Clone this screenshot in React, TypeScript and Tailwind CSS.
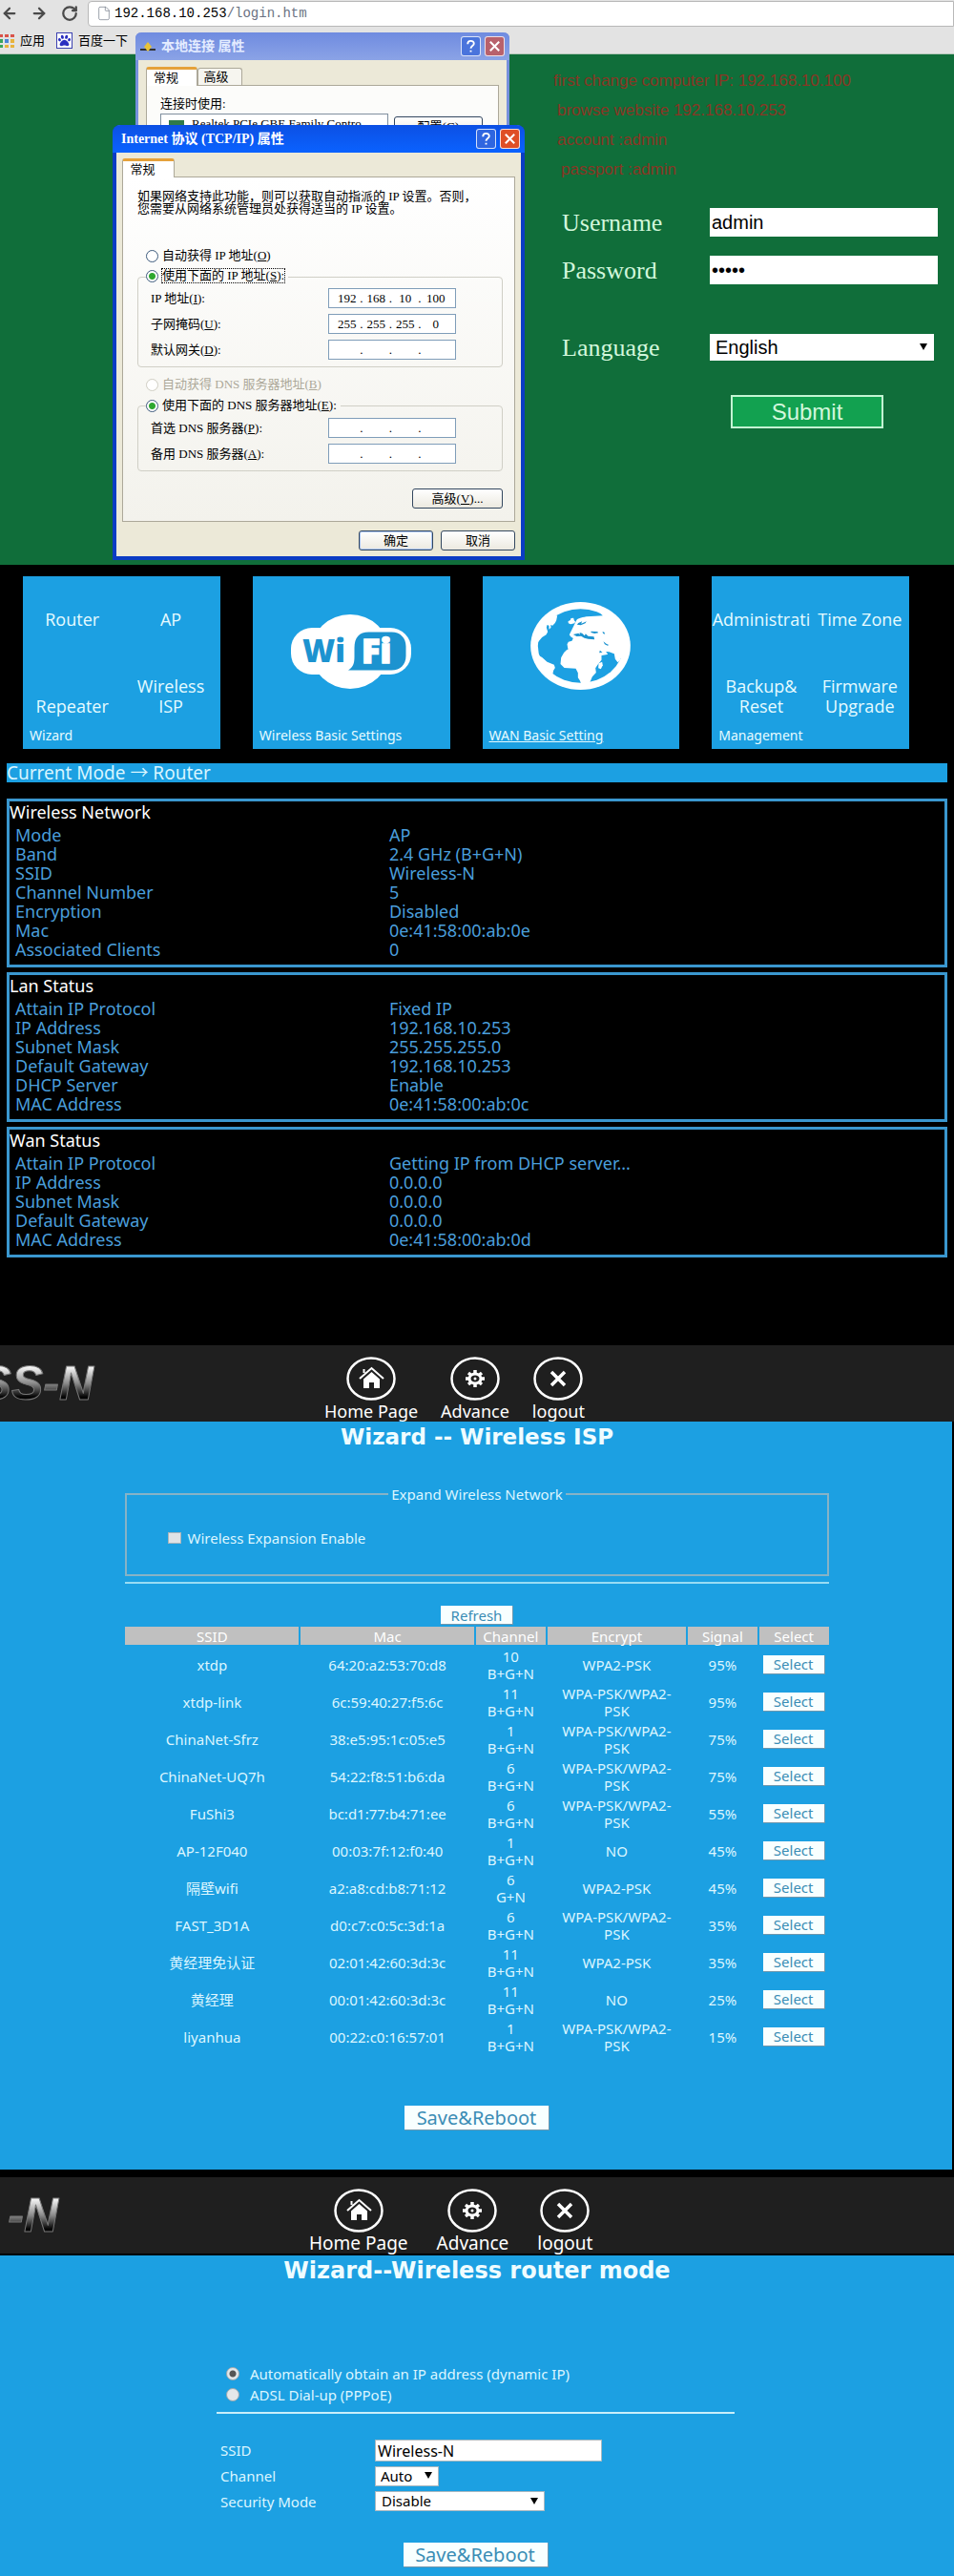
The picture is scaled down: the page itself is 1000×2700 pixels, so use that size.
import { ReactNode, useState } from "react";
import { ArrowLeft, ArrowRight, File, RotateCw } from "lucide-react";
import { FaPaw } from "react-icons/fa";

type Row = [string, string];

const wirelessRows: Row[] = [
  ["Mode", "AP"],
  ["Band", "2.4 GHz (B+G+N)"],
  ["SSID", "Wireless-N"],
  ["Channel Number", "5"],
  ["Encryption", "Disabled"],
  ["Mac", "0e:41:58:00:ab:0e"],
  ["Associated Clients", "0"],
];

const lanRows: Row[] = [
  ["Attain IP Protocol", "Fixed IP"],
  ["IP Address", "192.168.10.253"],
  ["Subnet Mask", "255.255.255.0"],
  ["Default Gateway", "192.168.10.253"],
  ["DHCP Server", "Enable"],
  ["MAC Address", "0e:41:58:00:ab:0c"],
];

const wanRows: Row[] = [
  ["Attain IP Protocol", "Getting IP from DHCP server..."],
  ["IP Address", "0.0.0.0"],
  ["Subnet Mask", "0.0.0.0"],
  ["Default Gateway", "0.0.0.0"],
  ["MAC Address", "0e:41:58:00:ab:0d"],
];

const networks = [
  { ssid: "xtdp", mac: "64:20:a2:53:70:d8", channel: "10", band: "B+G+N", encrypt: "WPA2-PSK", signal: "95%" },
  { ssid: "xtdp-link", mac: "6c:59:40:27:f5:6c", channel: "11", band: "B+G+N", encrypt: "WPA-PSK/WPA2-PSK", signal: "95%" },
  { ssid: "ChinaNet-Sfrz", mac: "38:e5:95:1c:05:e5", channel: "1", band: "B+G+N", encrypt: "WPA-PSK/WPA2-PSK", signal: "75%" },
  { ssid: "ChinaNet-UQ7h", mac: "54:22:f8:51:b6:da", channel: "6", band: "B+G+N", encrypt: "WPA-PSK/WPA2-PSK", signal: "75%" },
  { ssid: "FuShi3", mac: "bc:d1:77:b4:71:ee", channel: "6", band: "B+G+N", encrypt: "WPA-PSK/WPA2-PSK", signal: "55%" },
  { ssid: "AP-12F040", mac: "00:03:7f:12:f0:40", channel: "1", band: "B+G+N", encrypt: "NO", signal: "45%" },
  { ssid: "隔壁wifi", mac: "a2:a8:cd:b8:71:12", channel: "6", band: "G+N", encrypt: "WPA2-PSK", signal: "45%" },
  { ssid: "FAST_3D1A", mac: "d0:c7:c0:5c:3d:1a", channel: "6", band: "B+G+N", encrypt: "WPA-PSK/WPA2-PSK", signal: "35%" },
  { ssid: "黄经理免认证", mac: "02:01:42:60:3d:3c", channel: "11", band: "B+G+N", encrypt: "WPA2-PSK", signal: "35%" },
  { ssid: "黄经理", mac: "00:01:42:60:3d:3c", channel: "11", band: "B+G+N", encrypt: "NO", signal: "25%" },
  { ssid: "liyanhua", mac: "00:22:c0:16:57:01", channel: "1", band: "B+G+N", encrypt: "WPA-PSK/WPA2-PSK", signal: "15%" },
];

function BrowserBar() {
  return (
    <header className="bg-[#e3e3e3] h-[57px] border-b border-[#b5c9ba]">
      <div className="flex items-center h-7 text-[#4a4a4a]">
        <button aria-label="Back" className="w-8 pl-px">
          <ArrowLeft className="size-[18px]" strokeWidth={3} />
        </button>
        <button aria-label="Forward" className="w-8">
          <ArrowRight className="size-[18px]" strokeWidth={3} />
        </button>
        <button aria-label="Reload" className="w-7">
          <RotateCw className="size-[18px]" strokeWidth={3} />
        </button>
        <div className="flex-1 flex items-center h-[27px] pl-2 bg-white border border-[#b8b8b8] rounded-l-sm font-['Liberation_Mono',monospace] text-sm">
          <File className="size-4 text-gray-500 mr-[3px]" strokeWidth={1} />
          <span className="text-black">192.168.10.253</span>
          <span className="text-gray-500">/login.htm</span>
        </div>
      </div>
      <nav className="flex items-center h-7 text-[13px] text-black font-['Noto_Sans_CJK_SC',sans-serif]">
        <a href="#apps" className="flex items-center gap-[6px]">
          <svg viewBox="0 0 15 15" className="size-[15px]">
            <path d="M0 1h3v3H0zM5 1h4v3H5zM11 1h4v3h-4z" fill="#d9534a" />
            <path d="M0 6h3v4H0z" fill="#3aa55b" />
            <path d="M5 6h4v4H5z" fill="#4a86d8" />
            <path d="M11 6h4v4h-4zM5 12h4v3H5zM11 12h4v3h-4z" fill="#e8b33c" />
            <path d="M0 12h3v3H0z" fill="#3aa55b" />
          </svg>
          应用
        </a>
        <a href="#baidu" className="flex items-center gap-[6px] ml-3">
          <span className="flex items-center justify-center size-[17px] bg-white border border-[#3a40b0]">
            <FaPaw className="size-[13px] text-[#2a2fc0]" />
          </span>
          百度一下
        </a>
      </nav>
    </header>
  );
}

function TitleButtons({ dim }: { dim?: boolean }) {
  return (
    <div className="flex gap-1 ml-auto">
      <button
        aria-label="Help"
        className={`size-[21px] rounded-[3px] border border-white/80 text-white flex items-center justify-center ${dim ? "bg-[#4a74dc]" : "bg-[#2f66e0]"}`}
      >
        <svg viewBox="0 0 16 16" className="size-[15px]" fill="none" stroke="currentColor" strokeWidth="2">
          <path d="M4.5 5.5c0-4.5 7-4.5 7-.5 0 2.500-3.500 2.500-3.500 5.500M8 12.500v2" />
        </svg>
      </button>
      <button
        aria-label="Close"
        className={`size-[21px] rounded-[3px] border border-white/80 text-white flex items-center justify-center ${dim ? "bg-[#b8616c]" : "bg-[#df4f26]"}`}
      >
        <svg viewBox="0 0 16 16" className="size-[15px]" fill="none" stroke="currentColor" strokeWidth="2.2">
          <path d="M3 3l10 10M13 3L3 13" />
        </svg>
      </button>
    </div>
  );
}

// access key shown as "(X)" with the letter underlined
function Key({ k }: { k: string }) {
  return (
    <>
      (<u>{k}</u>)
    </>
  );
}

function IpField({ id, label, k, value }: { id: string; label: string; k: string; value: string[] }) {
  return (
    <div className="flex items-center h-[21px]">
      <label htmlFor={id} className="w-[186px]">
        {label}
        <Key k={k} />:
      </label>
      <div className="flex items-center h-[21px] w-[134px] px-[5px] bg-white border border-[#7f9db9]">
        {value.map((part, i) => (
          <span key={i} className="flex flex-1 items-center">
            <input
              id={i === 0 ? id : undefined}
              aria-label={i === 0 ? undefined : `${label} ${i + 1}`}
              defaultValue={part}
              className="w-full min-w-0 text-center outline-none"
            />
            {i < 3 && <span>.</span>}
          </span>
        ))}
      </div>
    </div>
  );
}

const xpRadio =
  "appearance-none size-[13px] shrink-0 rounded-full border border-[#3c5a7c] bg-white checked:bg-[radial-gradient(circle,#2fa82f_0_3px,#ffffff_4px)] disabled:border-[#cfcdc2]";
const xpButton =
  "h-[21px] rounded-[3px] border border-[#33475f] bg-linear-to-b from-white to-[#ece9e0]";

function ConnectionWindow() {
  return (
    <div className="absolute left-[142px] top-[34px] w-[392px] h-[104px] rounded-t-md border-x-3 border-[#7690dc] bg-[#ece9d8] text-black">
      <div className="flex items-center h-[29px] -mx-[3px] pl-[5px] pr-[5px] rounded-t-md bg-linear-to-b from-[#6f8be0] to-[#8ba3e6] text-[#e4ecff] font-bold text-sm">
        <svg viewBox="0 0 16 12" className="w-4 h-3 mr-[6px]">
          <path d="M0 8h16v2H0z" fill="#333" />
          <path d="M8 1l4 5-4 5-4-5z" fill="#e8c33a" />
        </svg>
        本地连接 属性
        <TitleButtons dim />
      </div>
      <div className="px-2 pt-[7px] text-[13px] leading-[18px]">
        <div className="flex items-end">
          <button className="h-5 w-[54px] pr-3 -mb-px bg-white border border-b-0 border-t-3 border-[#aca899] border-t-[#e5a13a] rounded-t-[3px] leading-4">
            常规
          </button>
          <button className="h-[18px] w-[47px] pr-2 bg-[#f6f5ef] border border-b-0 border-[#aca899] rounded-t-[3px] leading-4">
            高级
          </button>
        </div>
        <div className="border border-[#aca899] bg-[#fcfcfa] pl-[14px] pr-4 pt-[10px]">
          <p>连接时使用:</p>
          <div className="flex items-start gap-[6px] mt-px">
            <div className="flex items-center gap-2 w-[240px] h-[22px] pl-2 bg-white border border-[#7f8f9f]">
              <span className="w-4 h-2 bg-[#2f7a4a]" />
              Realtek PCIe GBE Family Contro
            </div>
            <button className={`${xpButton} mt-[3px] w-[94px]`}>
              配置
              <Key k="C" />
            </button>
          </div>
        </div>
      </div>
    </div>
  );
}

function TcpIpWindow() {
  return (
    <div className="absolute left-[118px] top-[131px] w-[432px] rounded-t-lg border-x-4 border-b-4 border-[#0b3cc4] bg-[#ece9d8] text-black">
      <div className="flex items-center h-[29px] -mx-1 pl-[9px] pr-[5px] rounded-t-lg bg-linear-to-b from-[#0c50e4] to-[#0a62ff] text-white font-bold text-sm">
        Internet 协议 (TCP/IP) 属性
        <TitleButtons />
      </div>
      <form className="px-[6px] pt-[6px] pb-[6px] text-[13px] leading-4" onSubmit={(e) => e.preventDefault()}>
        <div>
          <button type="button" className="relative block h-5 w-[55px] pr-3 -mb-px bg-white border border-b-0 border-t-3 border-[#aca899] border-t-[#e5a13a] rounded-t-[3px] leading-4">
            常规
          </button>
        </div>
        <div className="border border-[#aca899] bg-linear-to-b from-white to-[#f3f2ec] pl-[15px] pr-3 pt-[13px] pb-[13px]">
          <p className="leading-[13px]">
            如果网络支持此功能，则可以获取自动指派的 IP 设置。否则，
            <br />
            您需要从网络系统管理员处获得适当的 IP 设置。
          </p>
          <label className="flex items-center gap-1 h-4 mt-[35px] ml-[9px]">
            <input type="radio" name="ip" className={xpRadio} />
            <span>
              自动获得 IP 地址
              <Key k="O" />
            </span>
          </label>
          <fieldset className="mt-[6px] border border-[#d0cfc6] rounded-[4px] pl-[13px] pb-[7px] pt-[4px] flex flex-col gap-[6px]">
            <legend className="h-4 -ml-[5px] pr-1">
              <label className="flex items-center gap-1">
                <input type="radio" name="ip" defaultChecked className={xpRadio} />
                <span className="outline-1 outline-dotted outline-black leading-[14px]">
                  使用下面的 IP 地址
                  <Key k="S" />:
                </span>
              </label>
            </legend>
            <IpField id="ip-address" label="IP 地址" k="I" value={["192", "168", "10", "100"]} />
            <IpField id="ip-mask" label="子网掩码" k="U" value={["255", "255", "255", "0"]} />
            <IpField id="ip-gateway" label="默认网关" k="D" value={["", "", "", ""]} />
          </fieldset>
          <label className="flex items-center gap-1 h-4 mt-[10px] ml-[9px] text-[#aca899]">
            <input type="radio" name="dns" disabled className={xpRadio} />
            <span>
              自动获得 DNS 服务器地址
              <Key k="B" />
            </span>
          </label>
          <fieldset className="mt-[6px] border border-[#d0cfc6] rounded-[4px] pl-[13px] pb-[7px] pt-[5px] flex flex-col gap-[6px]">
            <legend className="h-4 -ml-[5px] pr-1">
              <label className="flex items-center gap-1">
                <input type="radio" name="dns" defaultChecked className={xpRadio} />
                <span>
                  使用下面的 DNS 服务器地址
                  <Key k="E" />:
                </span>
              </label>
            </legend>
            <IpField id="dns-first" label="首选 DNS 服务器" k="P" value={["", "", "", ""]} />
            <IpField id="dns-second" label="备用 DNS 服务器" k="A" value={["", "", "", ""]} />
          </fieldset>
          <div className="flex justify-end mt-[18px]">
            <button type="button" className={`${xpButton} w-[95px]`}>
              高级
              <Key k="V" />
              ...
            </button>
          </div>
        </div>
        <div className="flex justify-end gap-2 mt-[9px]">
          <button className={`${xpButton} w-[78px] ring-1 ring-inset ring-[#a9c4f2]`}>确定</button>
          <button type="button" className={`${xpButton} w-[78px]`}>
            取消
          </button>
        </div>
      </form>
    </div>
  );
}

function LoginForm() {
  const label = "w-[155px] font-['Liberation_Serif',serif] text-[26px] text-[#d2f7dc]";
  return (
    <main className="bg-[#106e3a] pt-3 pb-[143px] font-['Liberation_Sans',sans-serif]">
      <form className="ml-auto w-[420px]" onSubmit={(e) => e.preventDefault()}>
        <div className="text-[17px] leading-[31px] text-[#883624]">
          <p>first change computer IP: 192.168.10.100</p>
          <p className="pl-1">browse website 192.168.10.253</p>
          <p className="pl-1">account :admin</p>
          <p className="pl-2">passport :admin</p>
        </div>
        <div className="flex items-center h-[30px] mt-[25px] pl-[9px]">
          <label htmlFor="username" className={label}>
            Username
          </label>
          <input id="username" defaultValue="admin" className="h-[30px] w-[239px] bg-white px-[2px] text-xl text-black" />
        </div>
        <div className="flex items-center h-[30px] mt-5 pl-[9px]">
          <label htmlFor="password" className={label}>
            Password
          </label>
          <input id="password" type="password" defaultValue="admin" className="h-[30px] w-[239px] bg-white px-[2px] text-xl text-black" />
        </div>
        <div className="flex items-center h-7 mt-[52px] pl-[9px]">
          <label htmlFor="language" className={label}>
            Language
          </label>
          <Select id="language" options={["English"]} className="h-7 w-[235px] pl-[6px] text-xl" />
        </div>
        <button className="block mt-9 ml-[186px] h-[35px] w-[160px] border-2 border-[#c3f5d3] bg-[#12a150] text-2xl leading-none text-[#d2f7dc]">
          Submit
        </button>
      </form>
    </main>
  );
}

function Select({ id, options, className }: { id: string; options: string[]; className: string }) {
  return (
    <span className="relative inline-block">
      <select id={id} className={`appearance-none block bg-white text-black ${className}`}>
        {options.map((o) => (
          <option key={o}>{o}</option>
        ))}
      </select>
      <svg viewBox="0 0 8 7" className="absolute right-[7px] top-1/2 -mt-1 w-2 h-[7px] pointer-events-none">
        <path d="M0 0h8L4 7z" fill="#000" />
      </svg>
    </span>
  );
}

function Tile({ title, underline, children }: { title: string; underline?: boolean; children: ReactNode }) {
  return (
    <section className="flex flex-col bg-[#1ca0e2] h-[181px] text-[#e6fbff]">
      <div className="h-[147px]">{children}</div>
      <a href="#tile" className={`pl-[7px] pt-[10px] text-sm ${underline ? "underline" : ""}`}>
        {title}
      </a>
    </section>
  );
}

function TileLinks({ items }: { items: string[] }) {
  return (
    <div className="grid grid-cols-2 grid-rows-[91px_56px] text-lg leading-[21px] text-center font-['Open_Sans',sans-serif]">
      {items.map((item, i) => (
        <a
          key={item}
          href="#link"
          className={`flex justify-center whitespace-pre-line ${i < 2 ? "items-center" : "items-end"}`}
        >
          {item}
        </a>
      ))}
    </div>
  );
}

function WifiLogo() {
  return (
    <svg viewBox="0 0 126 78" className="w-[126px] h-[78px] mx-auto" aria-label="WiFi">
      <ellipse cx="62" cy="39" rx="41" ry="39" fill="#fff" />
      <rect x="0" y="14" width="126" height="49" rx="22" fill="#fff" />
      <path d="M60 58.500c5-3 6.500-7 6.500-14V35c0-11 5-16.500 15-16.500h24c9 0 15 6 15 15v10c0 9-6 15-15 15z" fill="#1c93d0" />
      <text x="12" y="50" fontFamily="Open Sans, sans-serif" fontWeight="800" fontSize="33" fill="#1c93d0">
        Wi
      </text>
      <text x="74" y="51" fontFamily="Open Sans, sans-serif" fontWeight="800" fontSize="36" fill="#fff" stroke="#fff" strokeWidth="1.500">
        Fi
      </text>
    </svg>
  );
}

function Globe() {
  return (
    <svg viewBox="0 0 314 276" className="w-[105px] h-[92px] mx-auto" aria-label="Globe">
      <ellipse cx="157" cy="138" rx="157" ry="138" fill="#fff" />
      <ellipse cx="157" cy="138" rx="134" ry="116" fill="#1ca0e2" />
      <g fill="#fff">
        <path d="M30 85L42 62l16-14 14-6 12 1-3 15-4 8-8 8-6-2 1 8-6 6 0-12-6-2-2 8 4 14-5 9-13 8-10 12-4 6-4-10z" />
        <path d="M10 160l12 6 14 8 16 14 22 9 3 10-5 8-2 10-14-2-36-30z" />
        <path d="M118 61l7-4 2-6 8-1 2 8 4 4-3 5-12 3-7-3z" />
        <path d="M143 60c3-9 16-10 32-14l28-2 24-1-8-8 30 5 40 40 20 50-5 32-12 22-9-8-2 8-7 6-8-11-3-16-16-6-10-1 6 8-6 2-14 2 0 14-12 15-7 11 2 14-12 13-8 19-11 9-13 2-7-18-6-9 0-15-7-14-36-2-12-12 2-20 9-16 9-9 4-1-3-16 4-8 11-3 4-8-8-5-4-6z" />
        <path d="M214 193l11-5 2 11-6 12-8-3z" />
      </g>
      <g fill="#1c93d0">
        <path d="M134 102l16-4 6 4-2-6 8 2 8 8 3-6 8 7 18 2 2 9-20-2-12-3-10-6-14 1z" />
        <path d="M190 92l20 1 3 4-12 2-11-3zM226 93l6 2 2 6-6-2zM150 66l12-5-3 7 17-7-4 6-14 6-12-2zM229 124l9 7 8 4-4 2-9-4zM218 152l8 6-10 2z" />
      </g>
    </svg>
  );
}

function StatusPanel({ title, rows }: { title: string; rows: Row[] }) {
  return (
    <section className="border-3 border-[#3a97cf] pb-[6px] text-lg leading-5 text-[#4a9edb]">
      <h2 className="text-white h-[25px] leading-[22px]">{title}</h2>
      <table className="w-full table-fixed leading-5">
        <tbody>
          {rows.map(([name, value]) => (
            <tr key={name}>
              <th className="w-[40.6%] pl-[6px] text-left font-normal">{name}</th>
              <td>{value}</td>
            </tr>
          ))}
        </tbody>
      </table>
    </section>
  );
}

function StatusPage() {
  return (
    <div className="bg-black pt-3 pb-[92px] px-[7px] font-['Noto_Sans','Noto_Sans_CJK_SC',sans-serif]">
      <div className="grid grid-cols-4 gap-[34px] pl-[17px] pr-10">
        <Tile title="Wizard">
          <TileLinks items={["Router", "AP", "Repeater", "Wireless\nISP"]} />
        </Tile>
        <Tile title="Wireless Basic Settings">
          <div className="pt-10">
            <WifiLogo />
          </div>
        </Tile>
        <Tile title="WAN Basic Setting" underline>
          <div className="pt-[27px]">
            <Globe />
          </div>
        </Tile>
        <Tile title="Management">
          <TileLinks items={["Administrati", "Time Zone", "Backup&\nReset", "Firmware\nUpgrade"]} />
        </Tile>
      </div>
      <p className="mt-[15px] h-5 bg-[#1ca0e2] text-[19px] leading-5 text-[#d8f5ff]">Current Mode → Router</p>
      <div className="flex flex-col gap-[5px] mt-[17px]">
        <StatusPanel title="Wireless Network" rows={wirelessRows} />
        <StatusPanel title="Lan Status" rows={lanRows} />
        <StatusPanel title="Wan Status" rows={wanRows} />
      </div>
    </div>
  );
}

function Logo({ id, text, end, className }: { id: string; text: string; end: number; className: string }) {
  return (
    <div className={`overflow-hidden ${className}`}>
      <svg width="140" height="60" viewBox="0 0 140 60" aria-label={text}>
        <defs>
          <linearGradient id={id} x1="0" y1="0" x2="0" y2="1">
            <stop offset="0.2" stopColor="#f4f4f4" />
            <stop offset="0.5" stopColor="#8a8a8a" />
            <stop offset="0.75" stopColor="#050505" />
          </linearGradient>
        </defs>
        <text
          x={end}
          y="45"
          textAnchor="end"
          fontFamily="Liberation Sans, sans-serif"
          fontWeight="bold"
          fontStyle="italic"
          fontSize="50"
          fill={`url(#${id})`}
          stroke="#777"
          strokeWidth="1"
          strokeLinejoin="round"
        >
          {text}
        </text>
      </svg>
    </div>
  );
}

function NavLink({ label, children }: { label: string; children: ReactNode }) {
  return (
    <a href="#nav" className="flex flex-col items-center leading-5">
      <svg viewBox="0 0 52 46" className="w-[52px] h-[46px]">
        <ellipse cx="26" cy="23" rx="24.500" ry="21.500" fill="none" stroke="#fff" strokeWidth="2.500" />
        {children}
      </svg>
      <span className="mt-px">{label}</span>
    </a>
  );
}

function TopNav({ className }: { className: string }) {
  return (
    <nav className={`flex text-white ${className}`}>
      <NavLink label="Home Page">
        <path d="M18 23.500l8.500-7.500 8.500 7.500V33h-6v-6h-5v6h-6z" fill="#fff" />
        <path d="M14 23l12.500-11L39 23M18.500 13v4" fill="none" stroke="#fff" strokeWidth="2" />
      </NavLink>
      <NavLink label="Advance">
        <ellipse cx="26" cy="23" rx="6" ry="5" fill="none" stroke="#fff" strokeWidth="3" />
        <path
          d="M26 14v3M26 29v3M16 23h3M33 23h3M19 17l2.500 2M33 17l-2.500 2M19 29l2.500-2M33 29l-2.500-2"
          stroke="#fff"
          strokeWidth="3.500"
        />
        <circle cx="26" cy="23" r="1.500" fill="#fff" />
      </NavLink>
      <NavLink label="logout">
        <path d="M19 16l14 14M33 16L19 30" stroke="#fff" strokeWidth="3.500" />
      </NavLink>
    </nav>
  );
}

const blueButton = "bg-[#f8ffff] text-[#3b8db5] border-b border-r border-[#6f97ad]";

function WirelessIspPage() {
  return (
    <div className="font-['Noto_Sans','Noto_Sans_CJK_SC',sans-serif] bg-black pb-2">
      <header className="flex bg-[#1f1f1f] h-20 pt-3">
        <Logo id="metal-a" text="SS-N" end={98} className="w-[34%]" />
        <TopNav className="gap-6 text-lg" />
      </header>
      <main className="mr-[2px] pl-[2px] bg-[#1ca0e2] pb-[41px] text-[15px] text-[#dcf6ff]">
        <h1 className="text-center font-['DejaVu_Sans',sans-serif] font-bold text-[23px] leading-8 text-[#effcff]">
          Wizard -- Wireless ISP
        </h1>
        <fieldset className="mx-[13%] mt-[35px] h-[95px] border-2 border-[#86b3c6] leading-[18px]">
          <legend className="mx-auto px-[3px]">Expand Wireless Network</legend>
          <label className="flex items-center gap-[6px] pl-[43px] pt-7">
            <input type="checkbox" className="appearance-none w-[14px] h-3 bg-[#dfe3e6] border border-[#a9b4ba] checked:bg-gray-500" />
            Wireless Expansion Enable
          </label>
        </fieldset>
        <hr className="mx-[13%] mt-[6px] border-t-2 border-[#98dcf4]" />
        <button className={`${blueButton} block mx-auto mt-[23px] h-5 w-[76px] leading-[18px]`}>Refresh</button>
        <table className="table-fixed border-separate border-spacing-[2px] w-[74.4%] mx-auto text-center leading-[18px]">
          <thead>
            <tr className="bg-[#c0c0c0] text-white h-[19px]">
              <th className="w-[25%] font-normal">SSID</th>
              <th className="w-[25%] font-normal">Mac</th>
              <th className="w-[10%] font-normal">Channel</th>
              <th className="w-[20%] font-normal">Encrypt</th>
              <th className="w-[10%] font-normal">Signal</th>
              <th className="w-[10%] font-normal">Select</th>
            </tr>
          </thead>
          <tbody>
            {networks.map((net) => (
              <tr key={net.mac} className="h-[37px]">
                <td>{net.ssid}</td>
                <td>{net.mac}</td>
                <td>
                  {net.channel}
                  <br />
                  {net.band}
                </td>
                <td className="px-2">{net.encrypt}</td>
                <td>{net.signal}</td>
                <td>
                  <button className={`${blueButton} block mx-auto h-5 w-[65px] leading-[18px]`}>Select</button>
                </td>
              </tr>
            ))}
          </tbody>
        </table>
        <button className={`${blueButton} block mx-auto mt-[52px] h-[26px] w-[152px] text-xl leading-6`}>
          Save&amp;Reboot
        </button>
      </main>
    </div>
  );
}

function RouterModePage() {
  const [mode, setMode] = useState("dhcp");
  return (
    <div className="font-['Noto_Sans',sans-serif] bg-[#1ca0e2] text-[15px] text-[#dcf6ff]">
      <header className="flex bg-[#1f1f1f] h-[82px] pt-3 border-b-2 border-black">
        <Logo id="metal-b" text="-N" end={61} className="w-[32.4%]" />
        <TopNav className="gap-[30px] text-[19px]" />
      </header>
      <main className="pb-3">
        <h1 className="text-center font-['DejaVu_Sans',sans-serif] font-bold text-2xl leading-8 text-[#effcff]">
          Wizard--Wireless router mode
        </h1>
        <form className="ml-[22.7%] mr-[23%]" onSubmit={(e) => e.preventDefault()}>
          <div className="flex flex-col gap-[2px] pt-[82px] pl-[10px] leading-5">
            <label className="flex items-center gap-[11px]">
              <input
                type="radio"
                name="wan"
                checked={mode === "dhcp"}
                onChange={() => setMode("dhcp")}
                className="appearance-none size-[14px] rounded-full border border-[#9aa6ad] bg-[#e4e8ea] checked:bg-[radial-gradient(circle,#555_0_3px,#e4e8ea_4px)]"
              />
              Automatically obtain an IP address (dynamic IP)
            </label>
            <label className="flex items-center gap-[11px]">
              <input
                type="radio"
                name="wan"
                checked={mode === "pppoe"}
                onChange={() => setMode("pppoe")}
                className="appearance-none size-[14px] rounded-full border border-[#9aa6ad] bg-[#e4e8ea] checked:bg-[radial-gradient(circle,#555_0_3px,#e4e8ea_4px)]"
              />
              ADSL Dial-up (PPPoE)
            </label>
          </div>
          <hr className="mt-2 border-t-2 border-[#c8eefa]" />
          <div className="flex flex-col gap-1 mt-[27px] pl-1">
            <div className="flex items-center">
              <label htmlFor="ssid" className="w-[162px]">
                SSID
              </label>
              <input id="ssid" defaultValue="Wireless-N" className="h-[23px] w-[238px] bg-white px-[2px] text-base text-black border border-[#a9b8c0]" />
            </div>
            <div className="flex items-center">
              <label htmlFor="channel" className="w-[162px]">
                Channel
              </label>
              <Select id="channel" options={["Auto"]} className="h-[21px] w-[67px] pl-[5px] text-[15px] leading-none border border-[#a9b8c0]" />
            </div>
            <div className="flex items-center">
              <label htmlFor="security" className="w-[162px]">
                Security Mode
              </label>
              <Select id="security" options={["Disable"]} className="h-[21px] w-[178px] pl-[6px] text-[15px] leading-none border border-[#a9b8c0]" />
            </div>
          </div>
          <button className={`${blueButton} block mx-auto mt-8 h-[26px] w-[152px] text-xl leading-6`}>
            Save&amp;Reboot
          </button>
        </form>
      </main>
    </div>
  );
}

export default function App() {
  return (
    <div className="overflow-hidden bg-black">
      <div className="relative font-['Liberation_Serif','Noto_Sans_CJK_SC',serif]">
        <BrowserBar />
        <LoginForm />
        <ConnectionWindow />
        <TcpIpWindow />
      </div>
      <StatusPage />
      <WirelessIspPage />
      <RouterModePage />
    </div>
  );
}
